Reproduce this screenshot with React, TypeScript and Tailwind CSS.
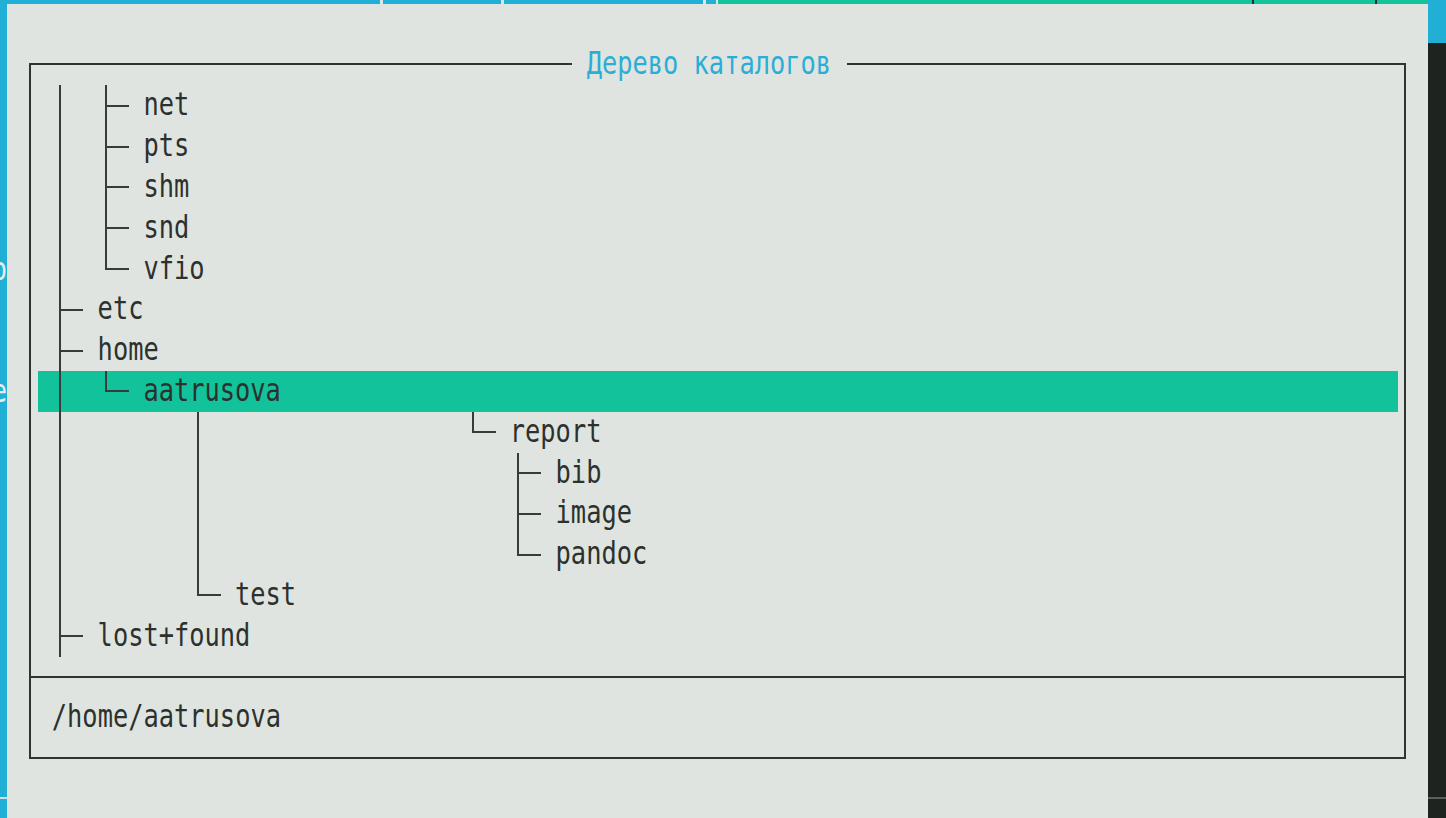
import React from 'react';
import clsx from 'clsx';

type Row = { prefix: string; name: string; selected?: boolean };

const sp = (n: number) => ' '.repeat(n);

// every char of prefix is one terminal cell, starting at the first column inside the frame
const rows: Row[] = [
  { prefix: ' │  ├─ ', name: 'net' },
  { prefix: ' │  ├─ ', name: 'pts' },
  { prefix: ' │  ├─ ', name: 'shm' },
  { prefix: ' │  ├─ ', name: 'snd' },
  { prefix: ' │  └─ ', name: 'vfio' },
  { prefix: ' ├─ ', name: 'etc' },
  { prefix: ' ├─ ', name: 'home' },
  { prefix: ' │  └─ ', name: 'aatrusova', selected: true },
  { prefix: ' │' + sp(8) + '│' + sp(17) + '└─ ', name: 'report' },
  { prefix: ' │' + sp(8) + '│' + sp(20) + '├─ ', name: 'bib' },
  { prefix: ' │' + sp(8) + '│' + sp(20) + '├─ ', name: 'image' },
  { prefix: ' │' + sp(8) + '│' + sp(20) + '└─ ', name: 'pandoc' },
  { prefix: ' │' + sp(8) + '└─ ', name: 'test' },
  { prefix: ' ├─ ', name: 'lost+found' },
];

const Cell: React.FC<{ ch: string }> = ({ ch }) => {
  if (ch === '│')
    return (
      <div className="flex h-[40.8px] w-[15.28px] shrink-0 justify-center">
        <div className="h-full w-[2px] bg-[#373c39]" />
      </div>
    );
  if (ch === '├')
    return (
      <div className="h-[40.8px] w-[15.28px] shrink-0 pl-[6.64px]">
        <div className="h-full border-l-2 border-[#373c39] pt-[19.4px]">
          <div className="h-[2px] bg-[#373c39]" />
        </div>
      </div>
    );
  if (ch === '└')
    return (
      <div className="h-[40.8px] w-[15.28px] shrink-0 pl-[6.64px]">
        <div className="h-[21.4px] border-b-2 border-l-2 border-[#373c39]" />
      </div>
    );
  if (ch === '─')
    return (
      <div className="h-[40.8px] w-[15.28px] shrink-0 pt-[19.4px]">
        <div className="h-[2px] bg-[#373c39]" />
      </div>
    );
  return <div className="h-[40.8px] w-[15.28px] shrink-0" />;
};

const Label: React.FC<{ children: React.ReactNode }> = ({ children }) => (
  <span className="block -translate-x-[1px] -translate-y-[1.5px] scale-y-[1.25] whitespace-pre text-[25.38px] leading-[40.8px] text-[#2c312e]">
    {children}
  </span>
);

const TreeRow: React.FC<Row> = ({ prefix, name, selected }) => (
  <div className={clsx('flex h-[40.8px]', selected && 'bg-[#12c29b]')}>
    {Array.from(prefix).map((ch, i) => (
      <Cell key={i} ch={ch} />
    ))}
    <Label>{name}</Label>
  </div>
);

const TopStrip = () => (
  <div className="flex h-[4px] shrink-0">
    <div className="w-[380px] bg-[#22afd6]" />
    <div className="w-[3px] bg-[#dce6e8]" />
    <div className="w-[118px] bg-[#22afd6]" />
    <div className="w-[3px] bg-[#dce6e8]" />
    <div className="w-[199px] bg-[#22afd6]" />
    <div className="w-[3px] bg-[#dce6e8]" />
    <div className="w-[10px] bg-[#22afd6]" />
    <div className="w-[2px] bg-[#dce6e8]" />
    <div className="w-[534px] bg-[#12c49a]" />
    <div className="w-[2px] bg-[#2a302d]" />
    <div className="w-[121px] bg-[#12c49a]" />
    <div className="w-[2px] bg-[#2a302d]" />
    <div className="flex-1 bg-[#12c49a]" />
  </div>
);

const LeftStrip = () => (
  <div className="flex w-[7px] shrink-0 flex-col overflow-hidden bg-[#22afd6]">
    <div className="h-[244.8px] shrink-0" />
    <div className="-ml-[8.28px] h-[40.8px] w-[15.28px] shrink-0">
      <span className="block scale-y-[1.25] text-[25.38px] leading-[40.8px] text-[#e6eef0]">o</span>
    </div>
    <div className="h-[81.6px] shrink-0" />
    <div className="-ml-[8.28px] h-[40.8px] w-[15.28px] shrink-0">
      <span className="block scale-y-[1.25] text-[25.38px] leading-[40.8px] text-[#e6eef0]">e</span>
    </div>
    <div className="h-[385px] shrink-0" />
    <div className="h-[2px] shrink-0 bg-[#d3dcdd]" />
  </div>
);

const RightStrip = () => (
  <div className="flex flex-1 flex-col">
    <div className="h-[43px] shrink-0 bg-[#22afd6]" />
    <div className="h-[754px] shrink-0" />
    <div className="h-[2px] shrink-0 bg-[#5a605d]" />
  </div>
);

export default function App() {
  return (
    <div className="flex h-screen w-full overflow-hidden bg-[#1e2320] font-['DejaVu_Sans_Mono',monospace]">
      <div className="flex w-[1428px] shrink-0 flex-col">
        <TopStrip />
        <div className="flex flex-1">
          <LeftStrip />
          {/* dialog */}
          <div className="w-[1421px] shrink-0 bg-[#dfe4e0] pl-[22px] pt-[59px]">
            <div className="relative h-[696px] w-[1377px] border-2 border-[#2f3431]">
              <div className="absolute -top-[21.4px] left-[541.4px] bg-[#dfe4e0] px-[15.28px]">
                <span className="block -translate-x-[1px] -translate-y-[1.5px] scale-y-[1.25] whitespace-pre text-[25.38px] leading-[40.8px] text-[#2aaed6]">
                  Дерево каталогов
                </span>
              </div>

              <div className="border-b-2 border-[#2f3431] pb-[19.4px] pt-[20.4px]">
                <div className="ml-[6.56px] w-[1360px]">
                  {rows.map((r) => (
                    <TreeRow key={r.name} {...r} />
                  ))}
                </div>
              </div>

              <div className="pt-[19.4px]">
                <div className="ml-[6.56px] flex h-[40.8px] w-[1360px]">
                  <Cell ch=" " />
                  <Label>/home/aatrusova</Label>
                </div>
              </div>
            </div>
          </div>
        </div>
      </div>
      <RightStrip />
    </div>
  );
}
